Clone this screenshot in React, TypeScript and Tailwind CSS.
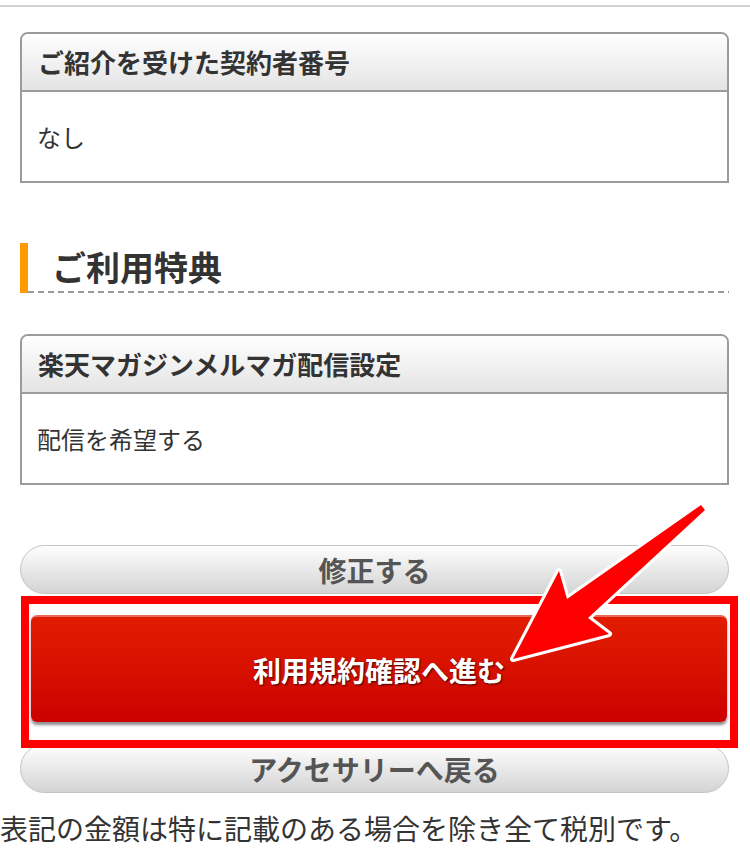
import React from "react";

function InfoBox({ title, value }: { title: string; value: string }) {
  return (
    <div className="ml-[20px] mr-[21px] border-2 border-[#9b9b9b] rounded-t-[8px] overflow-hidden bg-white">
      <div className="h-[58px] flex items-center pl-[16px] bg-linear-to-b from-white to-[#e4e4e4] border-b-2 border-[#9b9b9b] text-[26px] font-bold text-[#333] leading-none">
        {title}
      </div>
      <div className="h-[89px] flex items-center pl-[15px] text-[24px] text-[#333] leading-none">
        {value}
      </div>
    </div>
  );
}

function GrayButton({ label }: { label: string }) {
  return (
    <div className="ml-[20px] mr-[21px] h-[49px] rounded-full border border-[#c4c4c4] bg-linear-to-b from-[#fefefe] to-[#d4d4d4] flex items-center justify-center text-[28px] font-bold text-[#555] leading-none">
      {label}
    </div>
  );
}

export default function App() {
  return (
    <div className="relative w-[750px] h-[856px] bg-white overflow-hidden font-['Noto_Sans_CJK_JP','Noto_Sans',sans-serif] text-[#333]">
      <div className="pt-[5px]">
        <div className="h-[2px] bg-[#d2d2d2]" />
      </div>

      <div className="mt-[25px]">
        <InfoBox title="ご紹介を受けた契約者番号" value="なし" />
      </div>

      <div className="mt-[60px] ml-[20px] mr-[21px] flex h-[50px]">
        <div className="w-[8px] bg-[#ff9900]" />
        <div className="flex-1 flex flex-col">
          <div className="flex-1 flex items-center pl-[24px] text-[34px] font-bold leading-none text-[#333]">
            ご利用特典
          </div>
          <div className="h-[2px] bg-[repeating-linear-gradient(to_right,#9a9a9a_0px,#9a9a9a_6px,transparent_6px,transparent_10px)]" />
        </div>
      </div>

      <div className="mt-[41px]">
        <InfoBox title="楽天マガジンメルマガ配信設定" value="配信を希望する" />
      </div>

      <div className="mt-[60px] flex flex-col">
        <GrayButton label="修正する" />
        <div className="mt-[21px] ml-[31px] mr-[23px] h-[107px] rounded-[6px] border-t-2 border-[#ea6a5a] bg-linear-to-b from-[#e21c00] to-[#cc0000] shadow-[0_3px_3px_rgba(0,0,0,0.45)] flex items-center justify-center text-[28px] font-bold text-white leading-none [text-shadow:1px_1px_2px_rgba(0,0,0,0.7)]">
          利用規約確認へ進む
        </div>
        <div className="mt-[22px]">
          <GrayButton label="アクセサリーへ戻る" />
        </div>
      </div>

      <div className="mt-[15px] text-[28px] leading-[40px] whitespace-nowrap text-[#333]">
        表記の金額は特に記載のある場合を除き全て税別です。
      </div>

      {/* annotation frame */}
      <div className="absolute left-[21px] top-[596px] w-[717px] h-[152px] border-[8px] border-[#ff0000] pointer-events-none" />

      {/* annotation arrow */}
      <svg
        className="absolute left-0 top-0 pointer-events-none"
        width="750"
        height="856"
        viewBox="0 0 750 856"
      >
        <polygon
          points="701,505 705,510 588,618 609,634 513,659 559,571 567,599"
          fill="#ff0000"
          stroke="#ffffff"
          strokeWidth="6"
          strokeLinejoin="round"
          paintOrder="stroke"
        />
      </svg>
    </div>
  );
}
